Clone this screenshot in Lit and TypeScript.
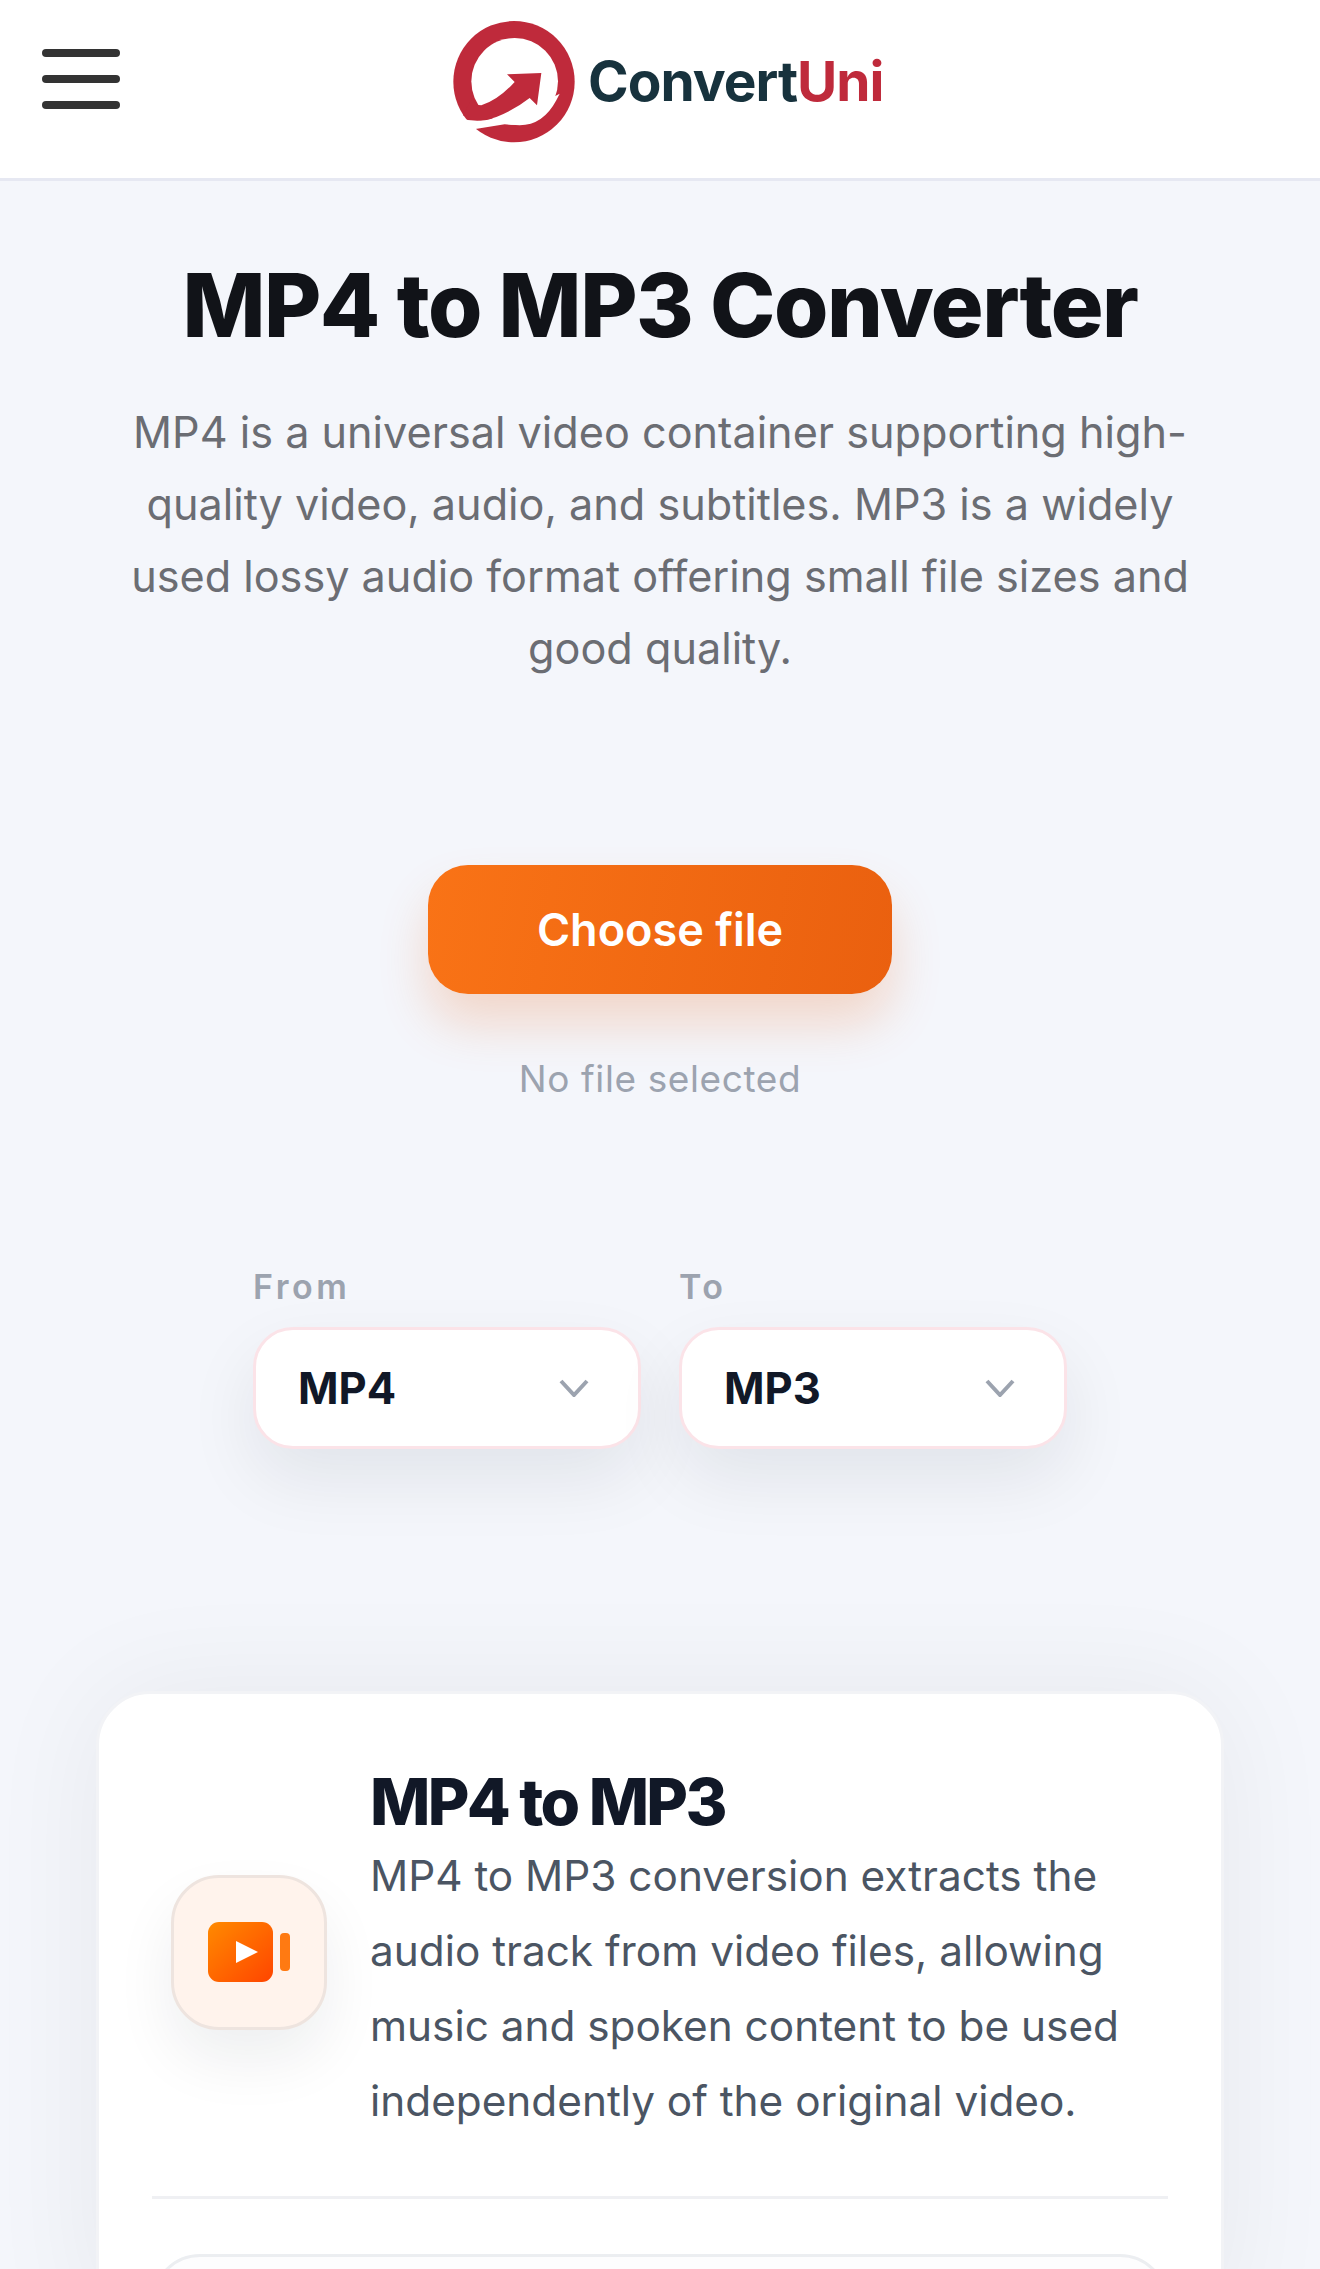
import { LitElement, html, css } from "lit";
import { customElement } from "lit/decorators.js";

@customElement("app-root")
export class AppRoot extends LitElement {
  static styles = css`
    :host { display: block; width: 1320px; height: 2269px; overflow: hidden; background: #f4f6fb; font-family: Inter, "Noto Sans", sans-serif; }
    * { box-sizing: border-box; }
    header { height: 181px; background: #fff; border-bottom: 3px solid #e6e8f2; display: flex; align-items: flex-start; position: relative; }
    .burger { margin: 49px 0 0 42px; width: 78px; display: flex; flex-direction: column; gap: 18px; }
    .burger span { display: block; height: 8px; border-radius: 4px; background: #333; }
    .logo { position: absolute; left: 453px; top: 21px; display: flex; align-items: flex-start; }
    .logo svg { display: block; width: 122px; height: 122px; }
    .brand { margin: 30px 0 0 13px; font-size: 55px; line-height: 60px; font-weight: 700; letter-spacing: -1px; color: #17323d; }
    .brand b { font-weight: 700; color: #bf2a3b; }
    main { display: flex; flex-direction: column; align-items: center; }
    h1 { margin: 71px 0 0; font-size: 88px; line-height: 106px; font-weight: 800; letter-spacing: -1.5px; color: #111318; text-align: center; }
    .intro { margin: 38px 0 0; width: 1070px; text-align: center; font-size: 43.2px; line-height: 72px; color: #6b6d73; }
    .btn { margin-top: 181px; width: 464px; height: 129px; border-radius: 40px; background: linear-gradient(100deg, #f97316, #ea600f); color: #fff; font-size: 45px; font-weight: 600; display: flex; align-items: center; justify-content: center; box-shadow: 0 30px 50px rgba(234, 88, 12, .2); }
    .none { margin-top: 60px; font-size: 37px; line-height: 50px; color: #9ca3af; letter-spacing: .6px; }
    .selects { margin-top: 162px; display: flex; gap: 38px; }
    .field { width: 388px; }
    .field label { display: block; font-size: 34px; line-height: 42px; font-weight: 600; letter-spacing: 3.5px; color: #9ca3af; }
    .select { margin-top: 19px; height: 122px; border-radius: 40px; border: 3px solid #fbe3e8; background: #fff; display: flex; align-items: center; justify-content: space-between; padding: 0 49px 0 42px; font-size: 43.5px; font-weight: 700; color: #111827; box-shadow: 0 30px 70px rgba(17, 24, 39, .08); }
    .select svg { width: 30px; height: 18px; display: block; }
    .card { margin-top: 242px; width: 1128px; height: 640px; border-radius: 54px; border: 3px solid #f2f3f6; background: #fff; padding: 72px 53px 0; box-shadow: 0 0 120px rgba(20, 24, 30, .06); }
    .row { display: flex; align-items: center; gap: 43px; padding: 0 18px 58px 19px; border-bottom: 3px solid #eff0f3; }
    .ico { flex: none; width: 156px; height: 155px; border-radius: 48px; border: 3px solid #eee4df; background: #fff3ec; display: flex; align-items: center; justify-content: center; box-shadow: 0 30px 60px rgba(17, 24, 39, .07); }
    .ico svg { display: block; width: 82px; height: 60px; }
    h2 { margin: 0; font-size: 64px; line-height: 72px; font-weight: 800; letter-spacing: -2.7px; color: #111827; }
    .row p { margin: 0; font-size: 42.3px; line-height: 75px; color: #4b5563; }
    .inner { margin: 55px 0 0; height: 200px; border-radius: 48px; border: 3px solid #eceef1; background: #fdfdfe; }
  `;

  render() {
    const chev = html`<svg viewBox="0 0 30 18"><path d="M2 2 L15 16 L28 2" fill="none" stroke="#9ca3af" stroke-width="4"/></svg>`;
    return html`
      <header>
        <div class="burger"><span></span><span></span><span></span></div>
        <div class="logo">
          <svg viewBox="100 62 366 366">
            <circle cx="283" cy="244" r="182" fill="#bf2a3b"/>
            <circle cx="285" cy="243" r="130" fill="#fff"/>
            <path d="M120 352 Q175 372 230 350 Q290 325 330 293 L352 315 L420 280 L410 300 Q370 375 300 375 L255 372 L172 385 L90 400 Z" fill="#fff"/>
            <path d="M158 292 Q165 315 185 315 Q235 300 285 245 L262 222 L365 218 L352 315 L330 293 Q290 325 230 350 Q175 372 130 345 Z" fill="#bf2a3b"/>
          </svg>
          <div class="brand">Convert<b>Uni</b></div>
        </div>
      </header>
      <main>
        <h1>MP4 to MP3 Converter</h1>
        <p class="intro">MP4 is a universal video container supporting high-quality video, audio, and subtitles. MP3 is a widely used lossy audio format offering small file sizes and good quality.</p>
        <div class="btn">Choose file</div>
        <div class="none">No file selected</div>
        <div class="selects">
          <div class="field"><label>From</label><div class="select">MP4 ${chev}</div></div>
          <div class="field"><label>To</label><div class="select">MP3 ${chev}</div></div>
        </div>
        <section class="card">
          <div class="row">
            <div class="ico">
              <svg viewBox="0 0 82 60">
                <defs><linearGradient id="g" x1="0" y1="0" x2="1" y2="1"><stop offset="0" stop-color="#ff8a00"/><stop offset="1" stop-color="#ff4500"/></linearGradient></defs>
                <rect x="0" y="0" width="65" height="60" rx="11" fill="url(#g)"/>
                <rect x="72" y="11" width="10" height="38" rx="4" fill="#ff7a12"/>
                <path d="M28 19 L50 30 L28 41 Z" fill="#fff"/>
              </svg>
            </div>
            <div>
              <h2>MP4 to MP3</h2>
              <p>MP4 to MP3 conversion extracts the audio track from video files, allowing music and spoken content to be used independently of the original video.</p>
            </div>
          </div>
          <div class="inner"></div>
        </section>
      </main>
    `;
  }
}
